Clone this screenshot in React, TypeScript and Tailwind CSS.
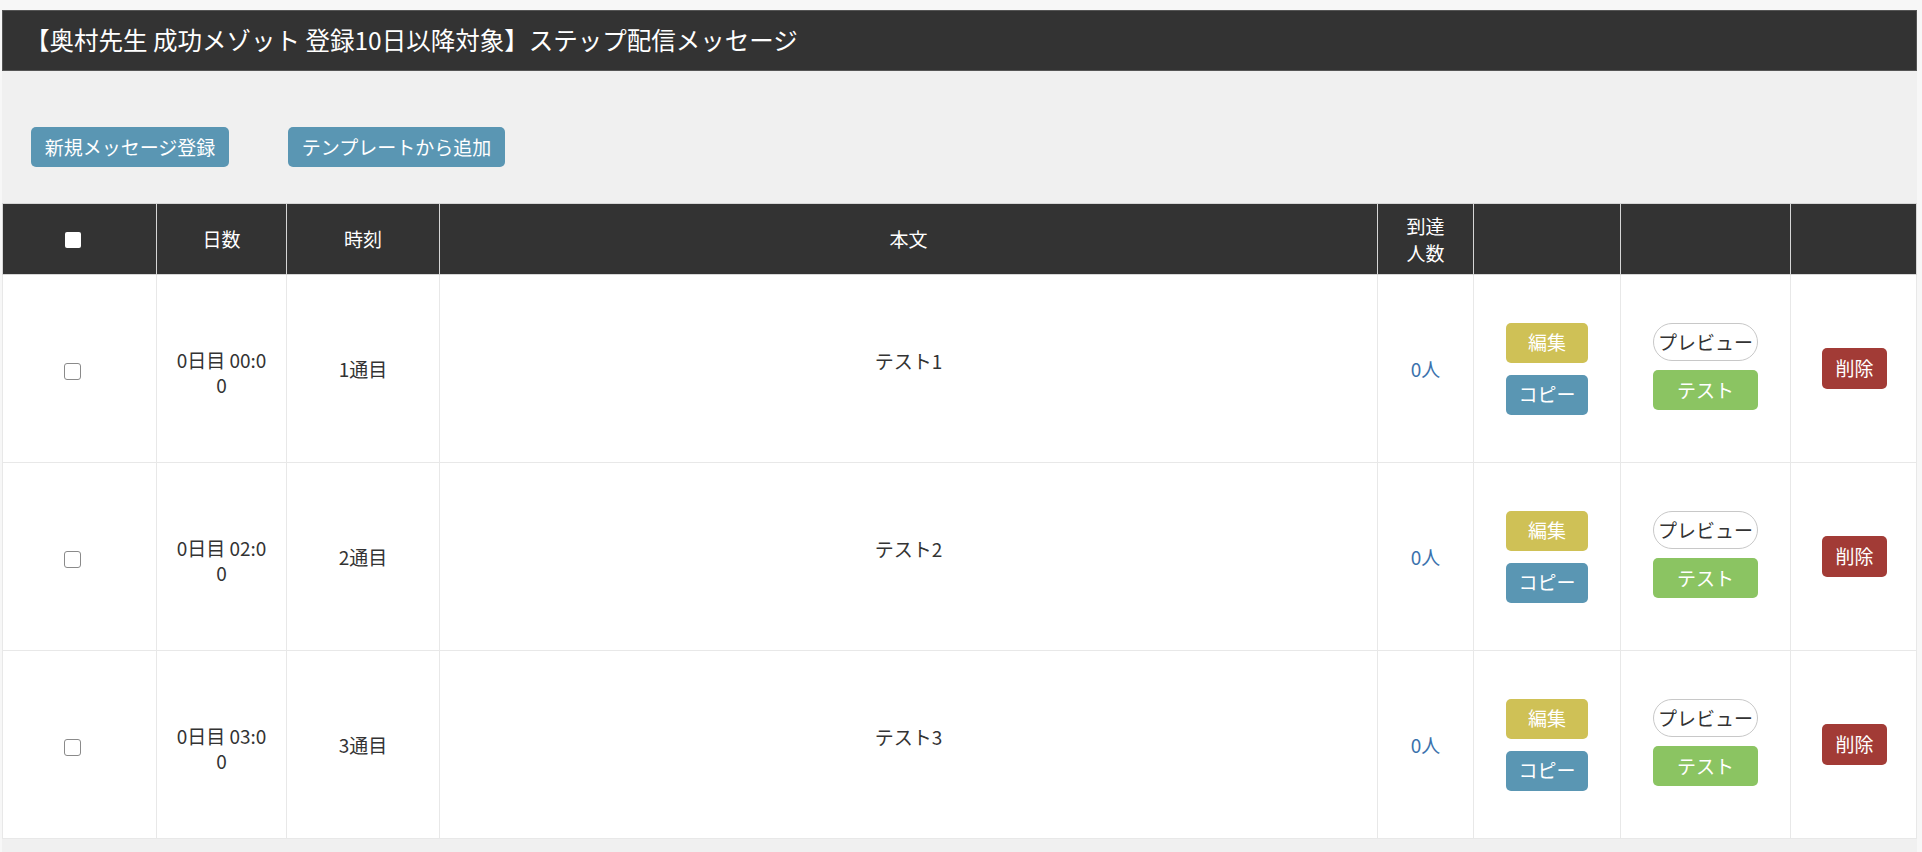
const rows = [
  { time: "0日目 00:00", order: "1通目", body: "テスト1", reach: "0人" },
  { time: "0日目 02:00", order: "2通目", body: "テスト2", reach: "0人" },
  { time: "0日目 03:00", order: "3通目", body: "テスト3", reach: "0人" },
];

export default function App() {
  return (
    <div className="min-h-screen bg-[#f7f7f7] pt-[10px] pl-[2px] pr-[5px] font-['Noto_Sans_CJK_JP',sans-serif] text-[#333]">
      <div className="min-h-[842px] bg-[#f0f0f0]">
        {/* タイトル */}
        <div className="flex h-[61px] items-center border border-[#555] bg-[#333] pl-[22px] text-[24.5px] text-white">
          【奥村先生 成功メゾット 登録10日以降対象】ステップ配信メッセージ
        </div>

        {/* 操作ボタン */}
        <div className="flex gap-[59px] pt-[56px] pb-[36px] pl-[29px]">
          <button className="flex h-[40px] w-[198px] items-center justify-center rounded-[5px] bg-[#5a96b3] text-[19px] text-white">
            新規メッセージ登録
          </button>
          <button className="flex h-[40px] w-[217px] items-center justify-center rounded-[5px] bg-[#5a96b3] text-[19px] text-white">
            テンプレートから追加
          </button>
        </div>

        {/* 一覧 */}
        <table className="w-full table-fixed border-collapse text-[19px]">
          <colgroup>
            <col className="w-[154px]" />
            <col className="w-[130px]" />
            <col className="w-[153px]" />
            <col className="w-[938px]" />
            <col className="w-[96px]" />
            <col className="w-[147px]" />
            <col className="w-[170px]" />
            <col />
          </colgroup>
          <thead>
            <tr className="h-[71px] bg-[#333] text-white">
              <th className="border border-[#d6d6d6] p-0 font-normal">
                <div className="flex justify-center pr-[14px] pt-[2px]">
                  <span className="block h-[16px] w-[16px] rounded-[2px] bg-white" />
                </div>
              </th>
              <th className="border border-[#d6d6d6] font-normal">日数</th>
              <th className="border border-[#d6d6d6] font-normal">時刻</th>
              <th className="border border-[#d6d6d6] font-normal">本文</th>
              <th className="border border-[#d6d6d6] font-normal leading-[27px]">
                到達
                <br />
                人数
              </th>
              <th className="border border-[#d6d6d6] font-normal" />
              <th className="border border-[#d6d6d6] font-normal" />
              <th className="border border-[#d6d6d6] font-normal" />
            </tr>
          </thead>
          <tbody className="bg-white">
            {rows.map((r) => (
              <tr key={r.order} className="h-[188px]">
                <td className="border border-[#e8e8e8] p-0 text-center align-middle">
                  <div className="flex justify-center pr-[14px] pt-[6px]">
                    <input
                      type="checkbox"
                      className="h-[17px] w-[17px] appearance-none rounded-[3px] border border-[#8a8a8a] bg-white"
                    />
                  </div>
                </td>
                <td className="border border-[#e8e8e8] px-[17px] pt-[6px] text-center align-middle leading-[25px] break-all">
                  {r.time}
                </td>
                <td className="border border-[#e8e8e8] pt-[2px] text-center align-middle">{r.order}</td>
                <td className="border border-[#e8e8e8] pb-[14px] text-center align-middle">{r.body}</td>
                <td className="border border-[#e8e8e8] pt-[2px] text-center align-middle text-[#3b72ad]">{r.reach}</td>
                <td className="border border-[#e8e8e8] align-middle">
                  <div className="flex flex-col items-center gap-[12px]">
                    <button className="flex h-[40px] w-[82px] items-center justify-center rounded-[5px] bg-[#cfc156] text-white">
                      編集
                    </button>
                    <button className="flex h-[40px] w-[82px] items-center justify-center rounded-[5px] bg-[#5a96b3] text-white">
                      コピー
                    </button>
                  </div>
                </td>
                <td className="border border-[#e8e8e8] pb-[4px] align-middle">
                  <div className="flex flex-col items-center gap-[9px]">
                    <button className="flex h-[38px] w-[105px] items-center justify-center rounded-full border border-[#c8c8c8] bg-white text-[#333]">
                      プレビュー
                    </button>
                    <button className="flex h-[40px] w-[105px] items-center justify-center rounded-[5px] bg-[#8bc462] text-white">
                      テスト
                    </button>
                  </div>
                </td>
                <td className="border border-[#e8e8e8] align-middle">
                  <div className="flex justify-center pl-[2px]">
                    <button className="flex h-[41px] w-[65px] items-center justify-center rounded-[5px] bg-[#a23b36] text-white">
                      削除
                    </button>
                  </div>
                </td>
              </tr>
            ))}
          </tbody>
        </table>
      </div>
    </div>
  );
}
